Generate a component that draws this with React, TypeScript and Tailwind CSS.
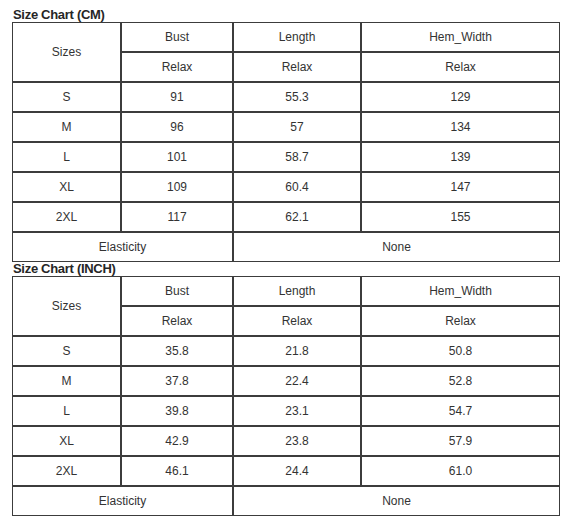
const charts = [
  {
    title: "Size Chart (CM)",
    rows: [
      ["S", "91", "55.3", "129"],
      ["M", "96", "57", "134"],
      ["L", "101", "58.7", "139"],
      ["XL", "109", "60.4", "147"],
      ["2XL", "117", "62.1", "155"],
    ],
  },
  {
    title: "Size Chart (INCH)",
    rows: [
      ["S", "35.8", "21.8", "50.8"],
      ["M", "37.8", "22.4", "52.8"],
      ["L", "39.8", "23.1", "54.7"],
      ["XL", "42.9", "23.8", "57.9"],
      ["2XL", "46.1", "24.4", "61.0"],
    ],
  },
];

const cell = "h-[30px] border border-[#3c3c3c] p-0 text-center align-middle font-normal";

function SizeTable({ title, rows }: { title: string; rows: string[][] }) {
  return (
    <div>
      <h2 className="pl-px text-[13px] font-bold leading-[14px] tracking-[-0.3px] text-[#262626]">
        {title}
      </h2>
      <table className="w-[548px] table-fixed border-separate border-spacing-0 text-[12px] leading-[14px] text-[#333]">
        <colgroup>
          <col className="w-[109px]" />
          <col className="w-[112px]" />
          <col className="w-[128px]" />
          <col className="w-[199px]" />
        </colgroup>
        <tbody>
          <tr>
            <td rowSpan={2} className={cell}>
              Sizes
            </td>
            <td className={cell}>Bust</td>
            <td className={cell}>Length</td>
            <td className={cell}>Hem_Width</td>
          </tr>
          <tr>
            <td className={cell}>Relax</td>
            <td className={cell}>Relax</td>
            <td className={cell}>Relax</td>
          </tr>
          {rows.map((row) => (
            <tr key={row[0]}>
              {row.map((value, i) => (
                <td key={i} className={cell}>
                  {value}
                </td>
              ))}
            </tr>
          ))}
          <tr>
            <td colSpan={2} className={cell}>
              Elasticity
            </td>
            <td colSpan={2} className={cell}>
              None
            </td>
          </tr>
        </tbody>
      </table>
    </div>
  );
}

export default function App() {
  return (
    <div className="h-[526px] w-[575px] bg-white pl-3 pt-2 font-['Liberation_Sans',Arial,sans-serif]">
      {charts.map((chart) => (
        <SizeTable key={chart.title} title={chart.title} rows={chart.rows} />
      ))}
    </div>
  );
}
